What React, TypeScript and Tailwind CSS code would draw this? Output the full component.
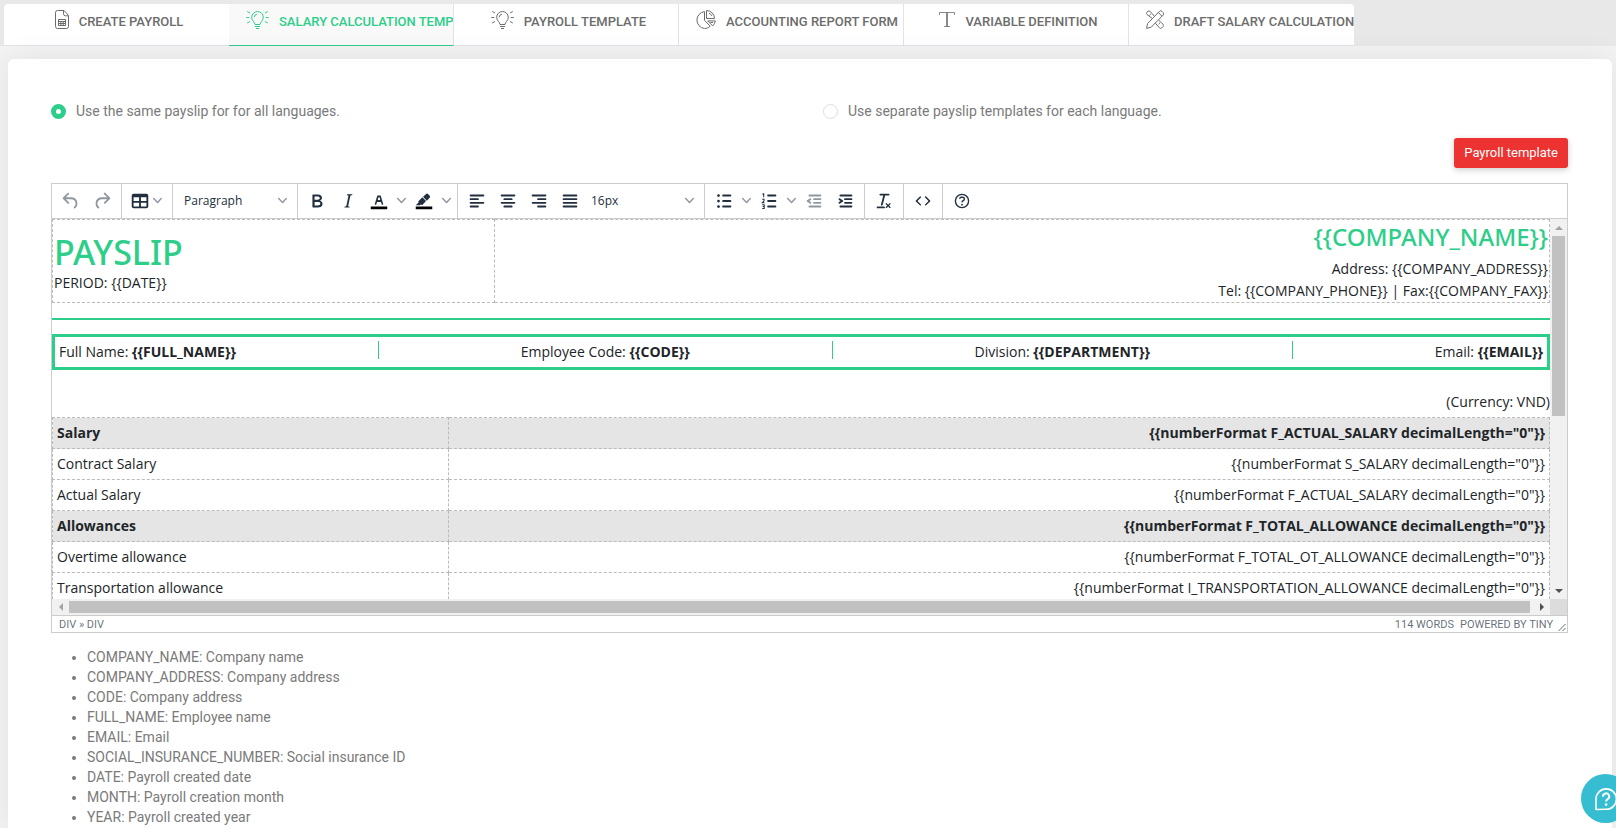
import type { ReactNode } from 'react';

type IconProps = { children: ReactNode };

/** Icône de barre d'outils, grille 24x24 */
function ToolIcon({ children }: IconProps) {
  return (
    <svg viewBox="0 0 24 24" className="size-[22px]" fill="currentColor" fillRule="evenodd" aria-hidden="true">
      {children}
    </svg>
  );
}

function Chevron() {
  return (
    <svg viewBox="0 0 10 10" className="size-[9px] shrink-0 text-[#8b95a1]" fill="currentColor" aria-hidden="true">
      <path d="M8.7 2.2c.3-.3.8-.3 1 0 .4.4.4.9 0 1.2L5.7 7.8c-.3.3-.9.3-1.2 0L.2 3.4a.8.8 0 0 1 0-1.2c.3-.3.8-.3 1.1 0L5 6l3.7-3.8Z" />
    </svg>
  );
}

/** Horizontal strokes given as [x1, x2, y] */
function Lines({ rows }: { rows: number[][] }) {
  return (
    <g stroke="currentColor" strokeWidth="2" strokeLinecap="round">
      {rows.map(([x1, x2, y]) => (
        <path key={`${x1}-${y}`} d={`M${x1} ${y}H${x2}`} />
      ))}
    </g>
  );
}

function Group({ children }: IconProps) {
  return <div className="flex items-center border-r border-[#ccc] pb-px pl-[3px] pr-1">{children}</div>;
}

function ToolButton({ label, disabled, children }: IconProps & { label: string; disabled?: boolean }) {
  return (
    <button
      type="button"
      aria-label={label}
      disabled={disabled}
      className="flex h-[31px] w-[31px] items-center justify-center text-[#222f3e] disabled:text-[#9097a0]"
    >
      {children}
    </button>
  );
}

function SplitButton({ label, children }: IconProps & { label: string }) {
  return (
    <div className="flex w-[45px] items-center">
      <ToolButton label={label}>{children}</ToolButton>
      <button type="button" aria-label={`${label} menu`} className="flex h-[31px] w-3.5 items-center justify-center">
        <Chevron />
      </button>
    </div>
  );
}

function Toolbar() {
  return (
    <div role="toolbar" className="flex h-[35px] border-b border-[#ccc] bg-white">
      <Group>
        <ToolButton label="Undo" disabled>
          <ToolIcon>
            <path d="M6.4 8H12c3.7 0 6.2 2 6.8 5.1.6 2.7-.4 5.6-2.3 6.8a1 1 0 0 1-1-1.8c1.1-.6 1.8-2.7 1.4-4.6-.5-2.1-2.1-3.5-4.9-3.5H6.4l3.3 3.3a1 1 0 1 1-1.4 1.4l-5-5a1 1 0 0 1 0-1.4l5-5a1 1 0 0 1 1.4 1.4L6.4 8Z" />
          </ToolIcon>
        </ToolButton>
        <ToolButton label="Redo" disabled>
          <ToolIcon>
            <path d="M17.6 10H12c-2.8 0-4.4 1.4-4.9 3.5-.4 2 .3 4 1.4 4.6a1 1 0 1 1-1 1.8c-2-1.2-2.9-4.1-2.3-6.8.6-3 3-5.1 6.8-5.1h5.6l-3.3-3.3a1 1 0 1 1 1.4-1.4l5 5a1 1 0 0 1 0 1.4l-5 5a1 1 0 0 1-1.4-1.4l3.3-3.3Z" />
          </ToolIcon>
        </ToolButton>
      </Group>
      <Group>
        <button type="button" aria-label="Table" className="flex h-[31px] w-[43px] items-center gap-0.5 pl-1 text-[#222f3e]">
          <ToolIcon>
            <path d="M19 4a2 2 0 0 1 2 2v12a2 2 0 0 1-2 2H5a2 2 0 0 1-2-2V6c0-1.1.9-2 2-2h14ZM5 14v4h6v-4H5Zm14 0h-6v4h6v-4Zm0-6h-6v4h6V8ZM5 12h6V8H5v4Z" />
          </ToolIcon>
          <Chevron />
        </button>
      </Group>
      <Group>
        <div className="relative flex items-center">
          <select aria-label="Blocks" className="h-[31px] w-[117px] appearance-none bg-transparent pl-2 text-xs text-[#222f3e]">
            <option>Paragraph</option>
          </select>
          <span className="pointer-events-none absolute right-1.5">
            <Chevron />
          </span>
        </div>
      </Group>
      <Group>
        <ToolButton label="Bold">
          <ToolIcon>
            <path d="M7.8 19c-.3 0-.5 0-.6-.2l-.2-.5V5.7c0-.2 0-.4.2-.5l.6-.2h5c1.5 0 2.7.3 3.5 1 .7.6 1.1 1.4 1.1 2.5a3 3 0 0 1-.6 1.9c-.4.6-1 1-1.6 1.2.4.1.9.3 1.3.6s.8.7 1 1.2c.4.4.5 1 .5 1.6 0 1.3-.4 2.3-1.3 3-.8.7-2.1 1-3.8 1H7.8Zm5-8.3c.6 0 1.2-.1 1.6-.5.4-.3.6-.7.6-1.3 0-1.1-.8-1.7-2.3-1.7H9.3v3.5h3.4Zm.5 6c.7 0 1.3-.1 1.7-.4.4-.4.6-.9.6-1.5s-.2-1-.7-1.4c-.4-.3-1-.4-2-.4H9.4v3.8h4Z" />
          </ToolIcon>
        </ToolButton>
        <ToolButton label="Italic">
          <ToolIcon>
            <path d="m16.7 4.7-.1.9h-.3c-.6 0-1 0-1.4.3-.3.3-.4.6-.5 1.1l-2.1 9.8v.6c0 .5.4.8 1.4.8h.2l-.2.8H8l.2-.8h.2c1.1 0 1.8-.5 2-1.5l2-9.8.1-.5c0-.6-.4-.8-1.4-.8h-.3l.2-.9h5.8Z" />
          </ToolIcon>
        </ToolButton>
        <SplitButton label="Text color">
          <ToolIcon>
            <path d="M3 18h18v3H3z" fill="#000" />
            <path d="M8.7 16h-.8a.5.5 0 0 1-.5-.6l2.7-9c.1-.3.3-.4.5-.4h2.8c.2 0 .4.1.5.4l2.7 9a.5.5 0 0 1-.5.6h-.8a.5.5 0 0 1-.4-.4l-.7-2.2c0-.3-.3-.4-.5-.4h-3.4c-.2 0-.4.1-.5.4l-.7 2.2c0 .3-.2.4-.4.4Zm2.6-7.6-.6 2a.5.5 0 0 0 .5.6h1.6a.5.5 0 0 0 .5-.6l-.6-2c0-.3-.3-.4-.5-.4h-.4c-.2 0-.4.1-.5.4Z" />
          </ToolIcon>
        </SplitButton>
        <SplitButton label="Background color">
          <ToolIcon>
            <path d="M3 18h18v3H3z" fill="#000" />
            <path d="M7.7 16.7H3l3.3-3.3-.7-.8L10.2 8l4 4.1-4 4.2c-.2.2-.6.2-.8 0l-.6-.7-1.1 1.1Zm5-7.5L11 7.4l3-2.9a2 2 0 0 1 2.6 0L18 6c.7.7.7 2 0 2.7l-2.9 2.9-1.8-1.8-.5-.6Z" />
          </ToolIcon>
        </SplitButton>
      </Group>
      <Group>
        <ToolButton label="Align left">
          <ToolIcon><Lines rows={[[5, 19, 6], [5, 13, 10], [5, 19, 14], [5, 13, 18]]} /></ToolIcon>
        </ToolButton>
        <ToolButton label="Align center">
          <ToolIcon><Lines rows={[[5, 19, 6], [8, 16, 10], [5, 19, 14], [8, 16, 18]]} /></ToolIcon>
        </ToolButton>
        <ToolButton label="Align right">
          <ToolIcon><Lines rows={[[5, 19, 6], [11, 19, 10], [5, 19, 14], [11, 19, 18]]} /></ToolIcon>
        </ToolButton>
        <ToolButton label="Justify">
          <ToolIcon><Lines rows={[[5, 19, 6], [5, 19, 10], [5, 19, 14], [5, 19, 18]]} /></ToolIcon>
        </ToolButton>
        <div className="relative flex items-center">
          <select aria-label="Font size" className="h-[31px] w-[115px] appearance-none bg-transparent pl-1.5 text-xs text-[#222f3e]">
            <option>16px</option>
          </select>
          <span className="pointer-events-none absolute right-1.5">
            <Chevron />
          </span>
        </div>
      </Group>
      <Group>
        <SplitButton label="Bullet list">
          <ToolIcon>
            <Lines rows={[[11, 19, 6], [11, 19, 12], [11, 19, 18]]} />
            <circle cx="6" cy="6" r="1.5" />
            <circle cx="6" cy="12" r="1.5" />
            <circle cx="6" cy="18" r="1.5" />
          </ToolIcon>
        </SplitButton>
        <SplitButton label="Numbered list">
          <ToolIcon>
            <Lines rows={[[11, 19, 6], [11, 19, 12], [11, 19, 18]]} />
            <path d="M4.8 4.6 6.2 4v4M4.6 10.2h2v1.6l-2 2.2h2.4M4.6 16h2.2v4.2H4.6M5 18h1.8" fill="none" stroke="currentColor" strokeWidth="1.1" />
          </ToolIcon>
        </SplitButton>
        <ToolButton label="Decrease indent" disabled>
          <ToolIcon>
            <Lines rows={[[7, 19, 6], [12, 19, 10], [12, 19, 14], [7, 19, 18]]} />
            <path d="M8.6 13.2a1 1 0 0 1-1.2 1.6l-3-2a1 1 0 0 1 0-1.6l3-2a1 1 0 0 1 1.2 1.6L6.8 12l1.8 1.2Z" />
          </ToolIcon>
        </ToolButton>
        <ToolButton label="Increase indent">
          <ToolIcon>
            <Lines rows={[[7, 19, 6], [12, 19, 10], [12, 19, 14], [7, 19, 18]]} />
            <path d="M5.4 13.2 7.2 12l-1.8-1.2a1 1 0 0 1 1.2-1.6l3 2a1 1 0 0 1 0 1.6l-3 2a1 1 0 0 1-1.2-1.6Z" />
          </ToolIcon>
        </ToolButton>
      </Group>
      <Group>
        <ToolButton label="Clear formatting">
          <ToolIcon>
            <path d="M13.2 6a1 1 0 0 1 0 .2l-2.6 10a1 1 0 0 1-1 .8h-.2a.8.8 0 0 1-.8-1l2.6-10H8a1 1 0 1 1 0-2h9a1 1 0 0 1 0 2h-3.8ZM5 18h7a1 1 0 0 1 0 2H5a1 1 0 0 1 0-2Zm13 1.5L16.5 18 15 19.5a.7.7 0 0 1-1-1l1.5-1.5-1.5-1.5a.7.7 0 0 1 1-1l1.5 1.5 1.5-1.5a.7.7 0 0 1 1 1L17.5 17l1.5 1.5a.7.7 0 0 1-1 1Z" />
          </ToolIcon>
        </ToolButton>
      </Group>
      <Group>
        <ToolButton label="Source code">
          <ToolIcon>
            <path d="M9.8 15.7c.3.3.3.8 0 1-.3.4-.9.4-1.2 0l-4.4-4.1a.8.8 0 0 1 0-1.2l4.4-4.2c.3-.3.9-.3 1.2 0 .3.3.3.8 0 1.1L6 12l3.8 3.7ZM14.2 15.7c-.3.3-.3.8 0 1 .4.4.9.4 1.2 0l4.4-4.1c.3-.3.3-.9 0-1.2l-4.4-4.2a.8.8 0 0 0-1.2 0c-.3.3-.3.8 0 1.1L18 12l-3.8 3.7Z" />
          </ToolIcon>
        </ToolButton>
      </Group>
      <div className="flex items-center pb-px pl-[3px]">
        <ToolButton label="Help">
          <ToolIcon>
            <circle cx="12" cy="12" r="7.2" fill="none" stroke="currentColor" strokeWidth="1.5" />
            <path d="M9.6 9.7a.7.7 0 0 1-.7-.8c0-1.1 1.5-1.8 3.2-1.8 1.8 0 3.2.8 3.2 2.4 0 1.4-.4 2.1-1.5 2.8-.2 0-.3.1-.3.2a2 2 0 0 0-.8.8.8.8 0 0 1-1.4-.6c.3-.7.8-1 1.3-1.5l.4-.2c.7-.4.8-.6.8-1.5 0-.5-.6-.9-1.7-.9-.5 0-1 .1-1.4.3-.2 0-.3.1-.3.2v-.2c0 .4-.4.8-.8.8Z" />
            <circle cx="12" cy="16" r="1" />
          </ToolIcon>
        </ToolButton>
      </div>
    </div>
  );
}

function TabIcon({ name }: { name: string }) {
  const common = { fill: 'none', stroke: 'currentColor', strokeWidth: 1, 'aria-hidden': true } as const;
  if (name === 'file') {
    return (
      <svg viewBox="0 0 14 19" className="h-[19px] w-3.5 shrink-0" {...common}>
        <path d="M2.500.5h6.500l4.500 4.800v11.200a2 2 0 0 1-2 2h-9a2 2 0 0 1-2-2v-14a2 2 0 0 1 2-2Z" />
        <path d="M8.500.8v3a2 2 0 0 0 2 2h2.700M3.500 9.500h7v6h-7zM3.500 11.500h7M5.800 11.500v4M8.200 11.500v4M3.500 13.500h7" />
      </svg>
    );
  }
  if (name === 'bulb') {
    return (
      <svg viewBox="0 0 23 19" className="h-[19px] w-[23px] shrink-0" {...common}>
        <path d="M9 14.500c0-2.400-3.300-3.500-3.300-7.200a5.800 5.800 0 0 1 11.600 0c0 3.700-3.300 4.800-3.300 7.200Z" />
        <path d="M8.200 7.200a3.200 3.200 0 0 1 2.800-3M9 16.500h5M10 18.500h3" />
        <path d="M.3 7.500h3M19.700 7.500h3M1.200 1.500 4 3M21.800 1.500 19 3M1.200 13 4 11.500M21.800 13 19 11.500" />
      </svg>
    );
  }
  if (name === 'pie') {
    return (
      <svg viewBox="0 0 20 19" className="h-[19px] w-5 shrink-0" {...common}>
        <path d="M8.500 1.600a8.500 8.500 0 0 0 0 16.900c2.300 0 4-.8 5.600-2.300L8.500 10.400Z" />
        <path d="M10.500.5v8h8a8 8 0 0 0-8-8ZM13 3.400c1.500.4 2.400 1.200 2.900 2.600" />
        <path d="M11.700 10.900h7.600a8 8 0 0 1-2.600 5ZM14.500 12.500h2.600" />
      </svg>
    );
  }
  if (name === 'type') {
    return (
      <svg viewBox="0 0 16 17" className="h-[17px] w-4 shrink-0" {...common}>
        <path d="M.5 4V1.500h15V4M7.500 1.500v14M8.500 1.500v14M5 15.500h6" strokeWidth="0.800" />
      </svg>
    );
  }
  return (
    <svg viewBox="0 0 18 19" className="h-[19px] w-[18px] shrink-0" {...common}>
      <path d="m.6 18.400.9-4.800L13.400 1.400a1.800 1.800 0 0 1 2.600 0l1.100 1.100a1.800 1.800 0 0 1 0 2.600L5.200 17.200.6 18.400ZM12.400 2.600l3.500 3.500" />
      <path d="M6.400 8.500.9 4.400a1.500 1.500 0 0 1 0-2L2 1.300a1.500 1.500 0 0 1 2 0l4.400 5M3.400 5.400l1.400-1.400M9.400 13.200l4 4.600a1.600 1.600 0 0 0 2.400 0l1.200-1.200a1.600 1.600 0 0 0 0-2.400l-4.400-4M12.600 14.200l1.400-1.400" />
    </svg>
  );
}

const tabs = [
  { icon: 'file', label: 'CREATE PAYROLL' },
  { icon: 'bulb', label: 'SALARY CALCULATION TEMPLATE', active: true },
  { icon: 'bulb', label: 'PAYROLL TEMPLATE' },
  { icon: 'pie', label: 'ACCOUNTING REPORT FORM' },
  { icon: 'type', label: 'VARIABLE DEFINITION' },
  { icon: 'tools', label: 'DRAFT SALARY CALCULATION' },
];

const employee = [
  ['Full Name', 'FULL_NAME'],
  ['Employee Code', 'CODE'],
  ['Division', 'DEPARTMENT'],
  ['Email', 'EMAIL'],
];

const rows = [
  { label: 'Salary', field: 'F_ACTUAL_SALARY', head: true },
  { label: 'Contract Salary', field: 'S_SALARY' },
  { label: 'Actual Salary', field: 'F_ACTUAL_SALARY' },
  { label: 'Allowances', field: 'F_TOTAL_ALLOWANCE', head: true },
  { label: 'Overtime allowance', field: 'F_TOTAL_OT_ALLOWANCE' },
  { label: 'Transportation allowance', field: 'I_TRANSPORTATION_ALLOWANCE' },
];

const variables = [
  'COMPANY_NAME: Company name',
  'COMPANY_ADDRESS: Company address',
  'CODE: Company address',
  'FULL_NAME: Employee name',
  'EMAIL: Email',
  'SOCIAL_INSURANCE_NUMBER: Social insurance ID',
  'DATE: Payroll created date',
  'MONTH: Payroll creation month',
  'YEAR: Payroll created year',
];

function PayslipDocument() {
  return (
    <div className="h-[380px] min-w-0 flex-1 overflow-hidden bg-white text-[14px] leading-[22px] text-[#212529]">
      <table className="w-full border-collapse">
        <tbody>
          <tr>
            <td className="w-[442px] border border-dashed border-[#bbb] px-px pt-1 align-middle">
              <h1 className="font-['Noto_Sans',sans-serif] text-[34px] font-medium leading-10 text-[#2dce89]">PAYSLIP</h1>
              <div>PERIOD: {'{{DATE}}'}</div>
            </td>
            <td className="border border-dashed border-[#bbb] px-px text-right align-top">
              <h2 className="mb-1 font-['Noto_Sans',sans-serif] text-[24px] font-medium leading-[34px] text-[#2dce89]">
                {'{{COMPANY_NAME}}'}
              </h2>
              <div>Address: {'{{COMPANY_ADDRESS}}'}</div>
              <div>Tel: {'{{COMPANY_PHONE}}'} | Fax:{'{{COMPANY_FAX}}'}</div>
            </td>
          </tr>
        </tbody>
      </table>
      <hr className="mt-[15px] border-t-2 border-[#2dce89]" />
      <div className="mt-3.5 flex h-9 items-center justify-between border-[3px] border-[#2dce89] px-1">
        {employee.map(([label, field], i) => (
          <div key={field} className="contents">
            {i > 0 && <span className="mb-1 h-[18px] w-px bg-[#2dce89]" />}
            <span>
              {label}: <strong>{`{{${field}}}`}</strong>
            </span>
          </div>
        ))}
      </div>
      <div className="mt-[21px] pb-1 text-right">(Currency: VND)</div>
      <table className="w-full border-collapse">
        <tbody>
          {rows.map(({ label, field, head }) => (
            <tr key={label} className={head ? 'bg-[#e5e5e5] font-bold' : ''}>
              <td className="h-[31px] w-[396px] border border-dashed border-[#bbb] px-1">{label}</td>
              <td className="border border-dashed border-[#bbb] px-1 text-right">
                {`{{numberFormat ${field} decimalLength="0"}}`}
              </td>
            </tr>
          ))}
        </tbody>
      </table>
    </div>
  );
}

function Arrow({ d, muted }: { d: string; muted?: boolean }) {
  return (
    <svg viewBox="0 0 8 8" className={muted ? 'size-2 text-[#a3a3a3]' : 'size-2 text-[#505050]'} fill="currentColor" aria-hidden="true">
      <path d={d} />
    </svg>
  );
}

function Editor() {
  return (
    <div className="border border-[#ccc] font-['Open_Sans','Noto_Sans',sans-serif]">
      <Toolbar />
      <div className="flex">
        <PayslipDocument />
        <div className="flex w-[17px] flex-col items-center bg-[#f1f1f1]">
          <div className="flex h-[17px] items-center"><Arrow d="M0 6 4 2l4 4Z" muted /></div>
          <div className="h-[180px] w-[13px] bg-[#c1c1c1]" />
          <div className="mt-auto flex h-[17px] items-center"><Arrow d="m0 2 4 4 4-4Z" /></div>
        </div>
      </div>
      <div className="flex h-4 bg-[#f1f1f1]">
        <div className="flex w-[17px] items-center justify-center"><Arrow d="M6 0 2 4l4 4Z" muted /></div>
        <div className="my-0.5 mr-[3px] flex-1 bg-[#c1c1c1]" />
        <div className="flex w-[17px] items-center justify-center"><Arrow d="m2 0 4 4-4 4Z" /></div>
        <div className="w-[17px] bg-[#dcdcdc]" />
      </div>
      <div className="flex h-[17px] items-end border-t border-[#ccc] bg-white pl-[7px] font-[Roboto,sans-serif] text-[11px] leading-[15px] text-[#222f3e]/70">
        <span>DIV » DIV</span>
        <span className="ml-auto">114 WORDS</span>
        <a href="#tiny" className="ml-1.5">POWERED BY TINY</a>
        <svg viewBox="0 0 10 10" className="ml-1 size-2.5" stroke="currentColor" aria-hidden="true">
          <path d="M1.500 9 8.500 2M5.500 9l3-3" />
        </svg>
      </div>
    </div>
  );
}

function Radio({ label, checked }: { label: string; checked?: boolean }) {
  return (
    <label className="flex items-center gap-2.5">
      <input
        type="radio"
        name="payslip-language"
        defaultChecked={checked}
        className="size-[15px] shrink-0 appearance-none rounded-full border border-[#ddd] bg-white checked:border-[5px] checked:border-[#2dce89]"
      />
      {label}
    </label>
  );
}

export default function App() {
  return (
    <div className="flex min-h-screen flex-col overflow-x-hidden bg-[#f3f3f3] font-[Roboto,sans-serif] text-[14px] leading-5 text-[#7a7a7a]">
      <nav className="flex bg-[#e8e8e8] px-1 pt-1">
        <div className="flex overflow-hidden rounded-t">
          {tabs.map(({ icon, label, active }) => (
            <a
              key={label}
              href="#tab"
              className={
                active
                  ? 'flex h-[42px] w-[225px] justify-center-safe gap-2.5 overflow-hidden whitespace-nowrap border-b border-r border-b-[#2dce89] border-r-[#e2e2ea] bg-[#f9f9f9] pb-1.5 pl-[17px] pr-3 text-[13px] font-medium text-[#2dce89]'
                  : 'flex h-[42px] w-[225px] justify-center-safe gap-2.5 overflow-hidden whitespace-nowrap border-b border-r border-[#e2e2ea] bg-white pb-1.5 pl-[17px] pr-3 text-[13px] font-medium text-[#6c6c6c] first:border-r-0 last:border-r-0'
              }
            >
              <span className="flex items-center pb-1"><TabIcon name={icon} /></span>
              <span className="self-center">{label}</span>
            </a>
          ))}
        </div>
      </nav>
      <main className="mx-2 mr-1 mt-[13px] flex-1 rounded-t-md bg-white pl-[43px] pr-11 pt-[42px] shadow-[0_0_30px_rgba(0,0,0,0.08)]">
        <div className="grid grid-cols-2 gap-x-[27px]">
          <Radio label="Use the same payslip for for all languages." checked />
          <Radio label="Use separate payslip templates for each language." />
        </div>
        <div className="mb-[15px] mt-[17px] flex justify-end">
          <button type="button" className="h-[30px] rounded-[3px] bg-[#ed3232] px-2.5 text-[13px] text-white shadow-[0_2px_6px_rgba(0,0,0,0.2)]">
            Payroll template
          </button>
        </div>
        <Editor />
        <ul className="mt-3.5 list-disc pl-9">
          {variables.map((item) => (
            <li key={item}>{item}</li>
          ))}
        </ul>
      </main>
      <button
        type="button"
        aria-label="Help chat"
        className="fixed -right-3.5 bottom-[5px] flex size-[49px] items-center justify-center rounded-full bg-[#37bdd1] text-white"
      >
        <svg viewBox="0 0 24 24" className="size-6" fill="none" stroke="currentColor" strokeWidth="1.6" aria-hidden="true">
          <path d="M2 22.500V12a10.200 10.200 0 1 1 10.200 10.300Z" strokeLinejoin="round" />
          <path d="M9 9.600a3.100 3.100 0 1 1 4.600 2.600c-1 .6-1.500 1.100-1.500 2.400" strokeWidth="2" />
          <circle cx="12.100" cy="17.600" r="1.300" fill="currentColor" stroke="none" />
        </svg>
      </button>
    </div>
  );
}
